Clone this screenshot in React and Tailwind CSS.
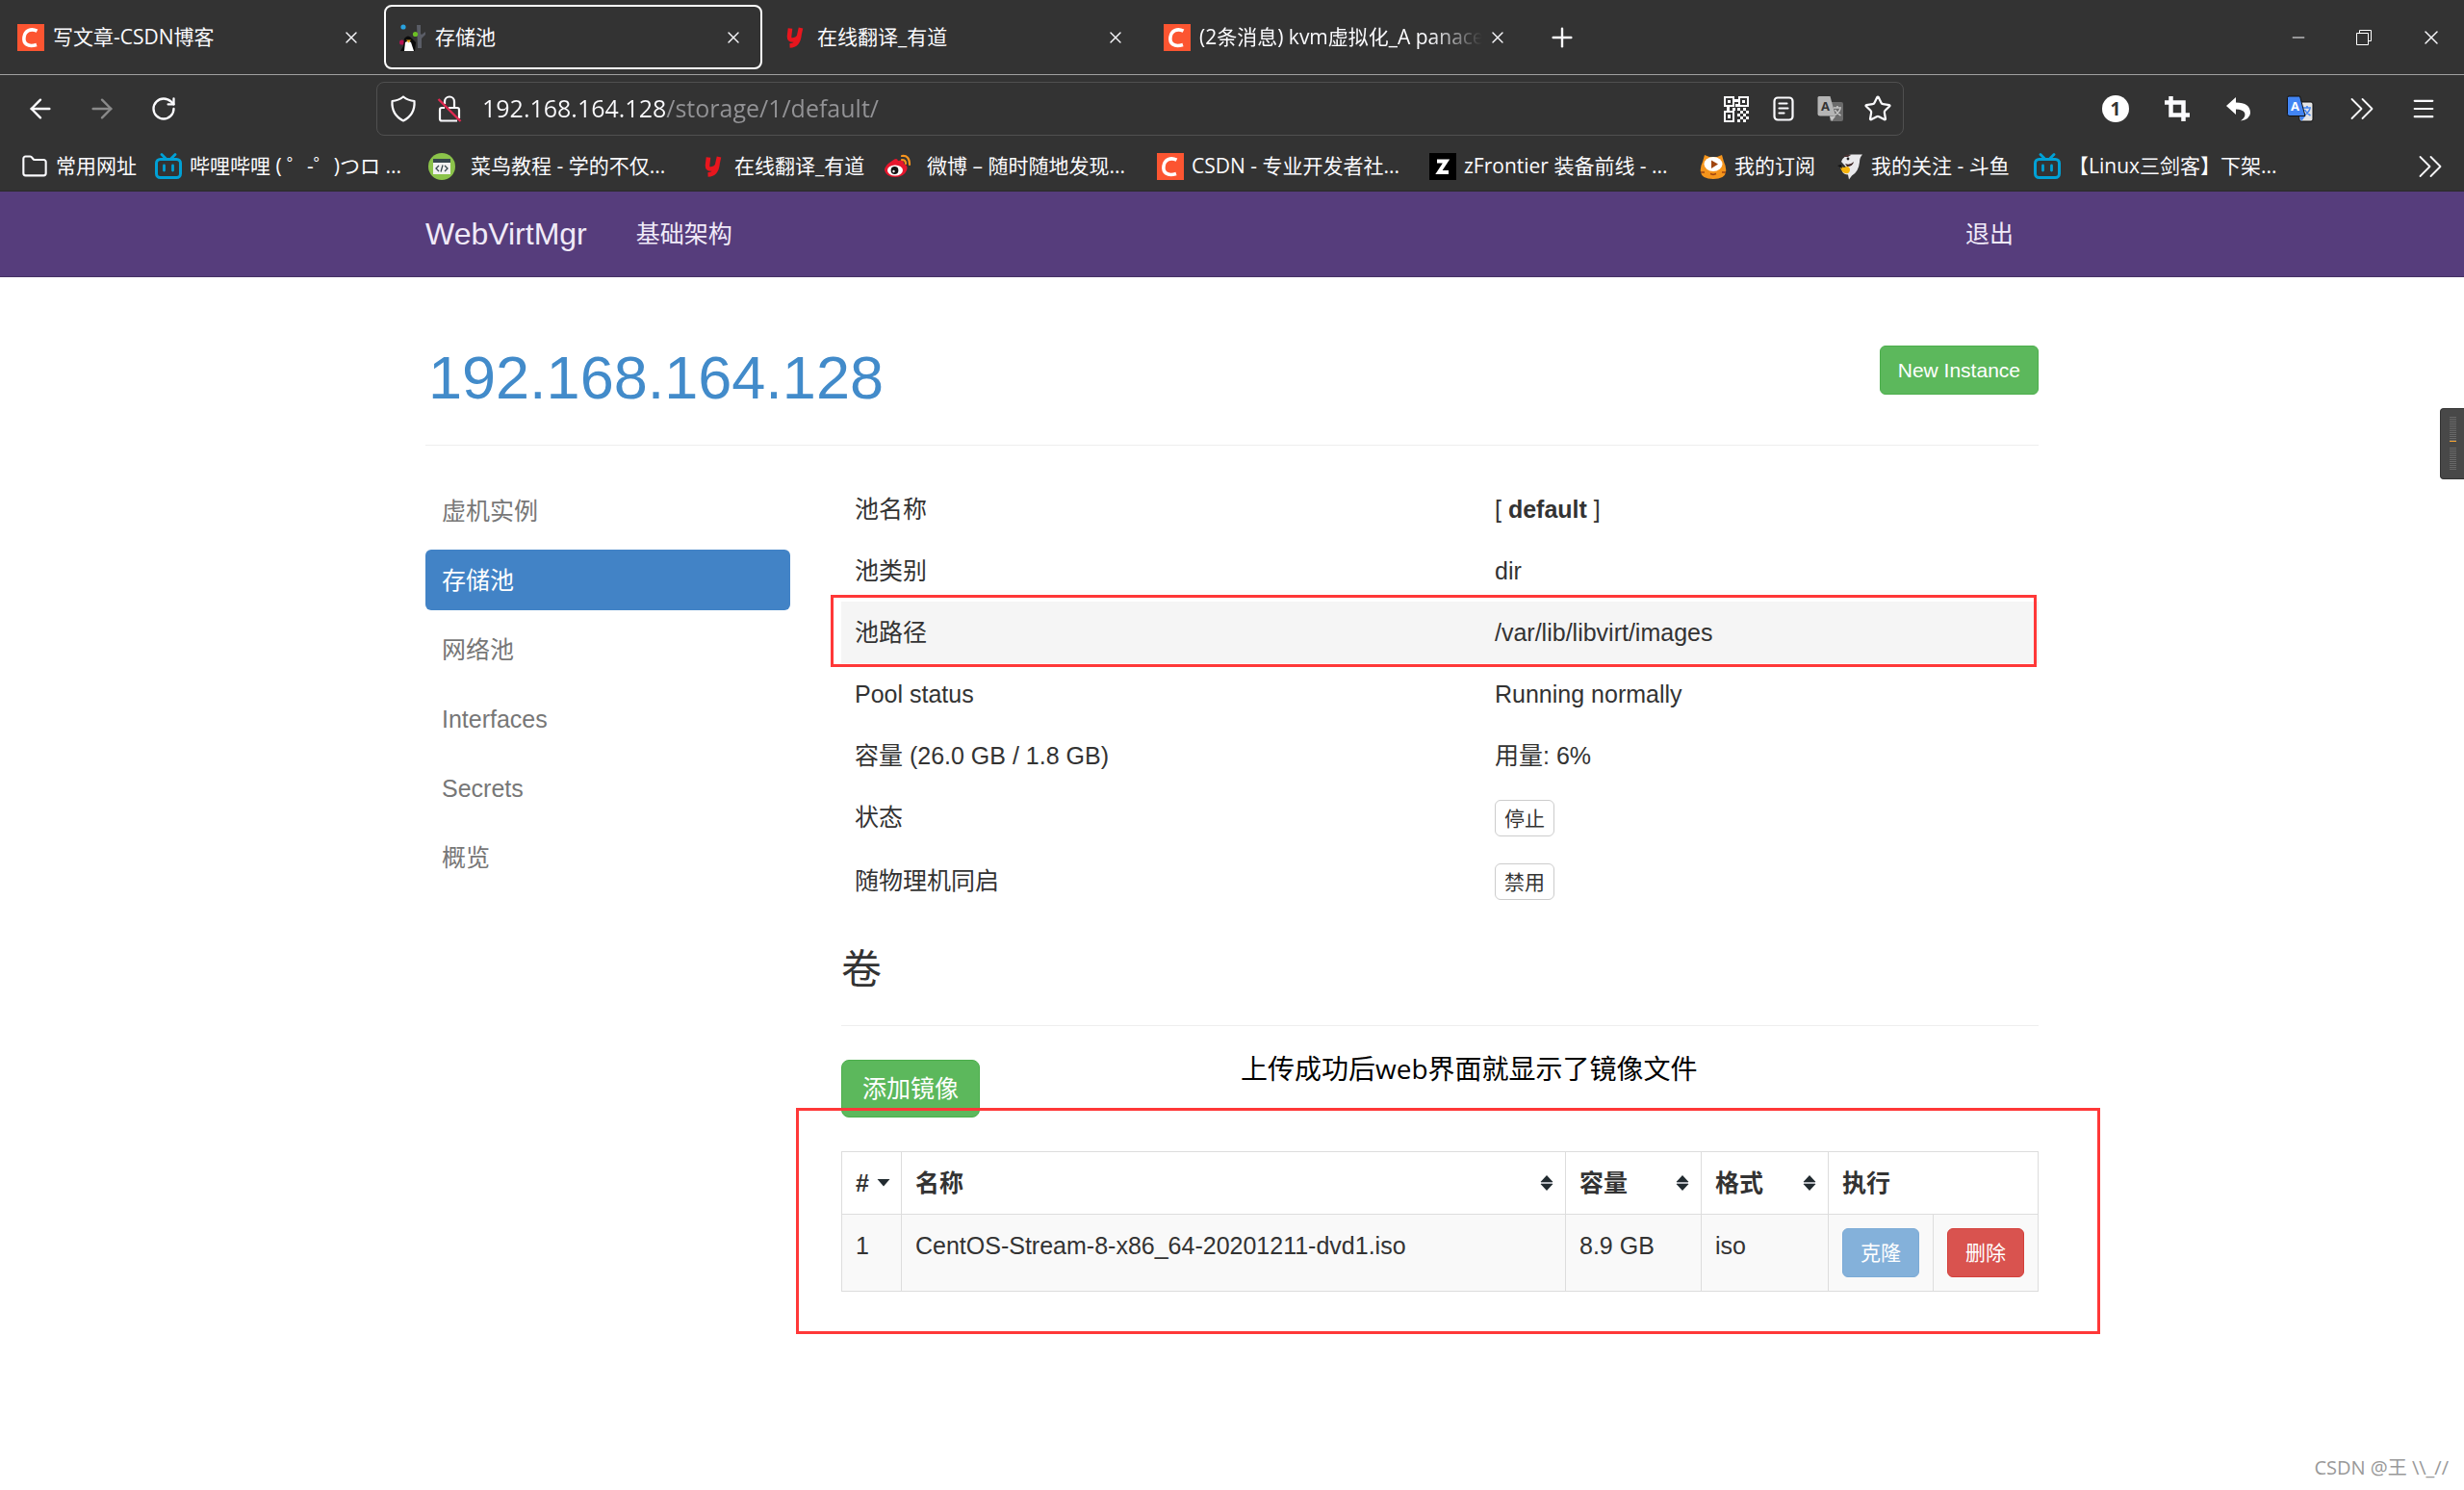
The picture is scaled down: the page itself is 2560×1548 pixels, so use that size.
import React from 'react';
import { X, Plus, Minus, ArrowLeft, ArrowRight, RotateCw, Folder, Star, Menu } from 'lucide-react';

/* ---------- site icons ---------- */

const CsdnIcon = () => (
  <svg viewBox="0 0 28 28" className="h-7 w-7 shrink-0" aria-hidden="true">
    <rect width="28" height="28" fill="#fc5531" />
    <path d="M20.5 7.2C14 4 8 7 7 13.5S10.500 24.500 20 21.500" fill="none" stroke="#fff" strokeWidth="3.600" />
  </svg>
);

const YoudaoIcon = () => (
  <svg viewBox="0 0 28 28" className="h-7 w-7 shrink-0" aria-hidden="true">
    <path d="M9 4.500L8 13q0 4 4 3.500t6-3.500l2-9M18.500 11q-1 11-10 11.500" fill="none" stroke="#e8161e" strokeWidth="4.600" />
  </svg>
);

const VirtIcon = () => (
  <svg viewBox="0 0 28 28" className="h-7 w-7 shrink-0" aria-hidden="true">
    <path d="M18 1h4v9l1 1 4-3v3l-4 4v10h-4z" fill="#5a5d66" />
    <circle cx="4" cy="3" r="2.600" fill="#29a3e0" />
    <circle cx="16.500" cy="10.500" r="2.600" fill="#6cc025" />
    <circle cx="2.600" cy="19" r="2.600" fill="#b5124f" />
    <path d="M5 15q4-5 8 0l4 4-1 9H1l3-5z" fill="#0b0b0b" />
    <path d="M6 19q3-2 6 0l3 9H5z" fill="#fff" />
    <path d="M7 16.500h5l-2.500 3z" fill="#f2b01e" />
  </svg>
);

const BiliIcon = () => (
  <svg viewBox="0 0 28 28" className="h-7 w-7 shrink-0" fill="none" stroke="#00a1d6" aria-hidden="true">
    <rect x="1.500" y="6.500" width="25" height="19" rx="4" strokeWidth="3" />
    <path d="M7 1.500l4 4M21 1.500l-4 4M9.500 13v5M18.500 13v5" strokeWidth="2.800" strokeLinecap="round" />
  </svg>
);

const RunoobIcon = () => (
  <svg viewBox="0 0 28 28" className="h-7 w-7 shrink-0" aria-hidden="true">
    <circle cx="14" cy="14" r="14" fill="#8bc34a" />
    <rect x="5" y="7" width="18" height="15" fill="#f1f1f1" />
    <rect x="5" y="6" width="18" height="4" fill="#37474f" />
    <path d="M11 13l-3 3 3 3M17 13l3 3-3 3M15 12.500l-2 7" fill="none" stroke="#37474f" strokeWidth="1.300" />
  </svg>
);

const WeiboIcon = () => (
  <svg viewBox="0 0 28 28" className="h-7 w-7 shrink-0" aria-hidden="true">
    <path d="M8 8q5-4 6 0 6-2 6 3 5 2 3 7-3 7-12 7T0 18Q0 13 8 8z" fill="#e6162d" />
    <ellipse cx="11" cy="18" rx="8" ry="5.500" fill="#fff" />
    <circle cx="10.500" cy="18" r="3.900" fill="#111" />
    <circle cx="9.500" cy="19" r="1.200" fill="#fff" />
    <path d="M18 3q8-1 8 9M18 7q4 0 4 4" fill="none" stroke="#f7941d" strokeWidth="2.200" strokeLinecap="round" />
  </svg>
);

const ZFrontierIcon = () => (
  <svg viewBox="0 0 28 28" className="h-7 w-7 shrink-0" aria-hidden="true">
    <rect width="28" height="28" fill="#000" />
    <path d="M8 8.500h9.500L10 20h10" fill="none" stroke="#fff" strokeWidth="4" />
  </svg>
);

const SubscribeIcon = () => (
  <svg viewBox="0 0 28 28" className="h-7 w-7 shrink-0" aria-hidden="true">
    <path d="M5 2l5 2h8l5-2 2 7q3 6 2 11-1 7-13 7T1 20Q0 15 3 9z" fill="#f5951c" />
    <ellipse cx="14" cy="11.500" rx="9.500" ry="7.500" fill="#fff" />
    <path d="M12 7.500l7 4-7 4.500z" fill="#a0450f" />
    <path d="M1 20h4M23 20h4M11 21.500l3 1 3-1" stroke="#a0450f" strokeWidth="1.500" fill="none" />
  </svg>
);

const DouyuIcon = () => (
  <svg viewBox="0 0 28 28" className="h-7 w-7 shrink-0" aria-hidden="true">
    <path d="M5 9Q8 1 17 1.500L27 1.500q-3 3-3 8-1 10-8 14l-3 4-1-5q-4 0-6-3l5-4z" fill="#e9e9ec" />
    <path d="M7 4q4-3 8-2l-3 2z" fill="#4a3030" />
    <circle cx="12" cy="6" r="1.400" fill="#222" />
    <path d="M9 11q5 2 9-2-1 5-7 5z" fill="#3a2222" />
    <path d="M4 14l4 1q5-3 6 2 0 5-5 4-4-1-5-7z" fill="#f6b40e" />
    <path d="M1 13l4-1 1 4z" fill="#111" />
  </svg>
);

/* ---------- toolbar icons ---------- */

const ShieldIcon = () => (
  <svg viewBox="0 0 28 28" className="h-7 w-7 shrink-0" fill="none" stroke="#fbfbfe" strokeWidth="2.200" aria-hidden="true">
    <path d="M14 1.500Q19 5.500 25.500 6 26.500 20 14 26.500 1.500 20 2.500 6 9 5.500 14 1.500z" strokeLinejoin="round" />
  </svg>
);

const InsecureIcon = () => (
  <svg viewBox="0 0 28 28" className="h-7 w-7 shrink-0" fill="none" stroke="#fbfbfe" strokeWidth="2.200" aria-hidden="true">
    <path d="M9 9V6.500a5 5 0 0110 0V13M9 13H6q-2 0-2 2v9.500q0 2 2 2h16M13 13h9q2 0 2 2v9" />
    <path d="M2.500 4L25.500 27" stroke="#e22850" strokeWidth="2.400" />
  </svg>
);

const QrIcon = () => (
  <svg viewBox="0 0 26 27" className="h-[27px] w-[26px]" fill="#fbfbfe" aria-hidden="true">
    <path fillRule="evenodd" d="M0 0h11v11H0zM2 2v7h7V2zM4 4h3v3H4zM15 0h11v11H15zM17 2v7h7V2zM19 4h3v3h-3zM0 15h11v12H0zM2 17v8h7v-8zM4 19h3v4H4z" />
    <path d="M11 3h4v3h-4zM3 11h3v4H3zM12 8h3v3h-3zM9 12h3v3H9zM14 12h3v3h-3zM20 12h3v3h-3zM17 15h3v3h-3zM23 15h3v3h-3zM14 18h3v3h-3zM20 18h3v3h-3zM17 21h3v3h-3zM23 21h3v3h-3zM14 24h3v3h-3zM20 24h3v3h-3z" />
  </svg>
);

const ReaderIcon = () => (
  <svg viewBox="0 0 22 26" className="h-[26px] w-[22px]" fill="none" stroke="#fbfbfe" strokeWidth="2.200" strokeLinecap="round" aria-hidden="true">
    <rect x="1.500" y="1.500" width="19" height="23" rx="3.500" />
    <path d="M6.500 7.500h8M6.500 12.500h9M6.500 17.500h5" />
  </svg>
);

const TranslateIcon = ({ front, back, ink, glyph }) => (
  <svg viewBox="0 0 28 28" className="h-7 w-7" aria-hidden="true">
    <rect x="13" y="7" width="14" height="20" rx="2" fill={back} stroke={ink} />
    <path d="M17 13h8M21 11v2M24 14q-2 5-7 7M18.500 15q2 4 6 6" fill="none" stroke={glyph} strokeWidth="1.600" />
    <path d="M2 1h11.500l5.500 20.500H3q-2.500 0-2.500-2V2.500Q.5 1 2 1z" fill={front} stroke={ink} />
    <path d="M13 22h6l-4 5z" fill={glyph} />
    <text x="4" y="16" fontSize="13" fontWeight="700" fontFamily="Open Sans, sans-serif" fill={ink === 'none' ? '#333' : '#fff'}>A</text>
  </svg>
);

const CropIcon = () => (
  <svg viewBox="0 0 26 26" className="h-[26px] w-[26px]" fill="none" stroke="#fbfbfe" strokeWidth="4.500" aria-hidden="true">
    <path d="M0 6.500h19.500V26M6.500 0v19.500H26" />
  </svg>
);

const UndoIcon = () => (
  <svg viewBox="0 0 26 26" className="h-[26px] w-[26px]" fill="#fff" aria-hidden="true">
    <path d="M0 10L10 1v5.500q15 0 15 11Q24.500 24 15 25.500q6-4 4-8.500-2-3.500-9-3.500V19z" />
  </svg>
);

const MoreIcon = () => (
  <svg viewBox="0 0 24 24" className="h-6 w-6" fill="none" stroke="#fbfbfe" strokeWidth="1.800" strokeLinecap="round" strokeLinejoin="round" aria-hidden="true">
    <path d="M1.500 2l10 10-10 10M12.500 2l10 10-10 10" />
  </svg>
);

const RestoreIcon = () => (
  <svg viewBox="0 0 16 16" className="h-4 w-4" fill="none" stroke="#fff" aria-hidden="true">
    <path d="M.5 3.500h12v12H.5zM3.500 3.500V.5h12v11h-3" />
  </svg>
);

/* ---------- data ---------- */

const tabs = [
  { title: '写文章-CSDN博客', Icon: CsdnIcon },
  { title: '存储池', Icon: VirtIcon, active: true },
  { title: '在线翻译_有道', Icon: YoudaoIcon },
  { title: '(2条消息) kvm虚拟化_A panace', Icon: CsdnIcon, fade: true },
];

const bookmarks = [
  { title: '常用网址', Icon: () => <Folder className="h-7 w-7 shrink-0" strokeWidth={1.8} />, width: 'w-[139px]' },
  { title: '哔哩哔哩 ( ゜-゜)つロ ...', Icon: BiliIcon, width: 'w-[284px]' },
  { title: '菜鸟教程 - 学的不仅...', Icon: RunoobIcon, width: 'w-[282px]', wide: true },
  { title: '在线翻译_有道', Icon: YoudaoIcon, width: 'w-[192px]' },
  { title: '微博 – 随时随地发现...', Icon: WeiboIcon, width: 'w-[283px]', wide: true },
  { title: 'CSDN - 专业开发者社...', Icon: CsdnIcon, width: 'w-[283px]' },
  { title: 'zFrontier 装备前线 - ...', Icon: ZFrontierIcon, width: 'w-[281px]' },
  { title: '我的订阅', Icon: SubscribeIcon, width: 'w-[142px]' },
  { title: '我的关注 - 斗鱼', Icon: DouyuIcon, width: 'w-[205px]' },
  { title: '【Linux三剑客】下架...', Icon: BiliIcon, width: 'w-[262px]' },
];

const menu = [
  { label: '虚机实例' },
  { label: '存储池', active: true },
  { label: '网络池' },
  { label: 'Interfaces' },
  { label: 'Secrets' },
  { label: '概览' },
];

const poolRows = [
  { label: '池名称', value: <>[ <strong>default</strong> ]</> },
  { label: '池类别', value: 'dir' },
  { label: '池路径', value: '/var/lib/libvirt/images', marked: true },
  { label: 'Pool status', value: 'Running normally' },
  { label: '容量 (26.0 GB / 1.8 GB)', value: '用量: 6%' },
  { label: '状态', action: '停止' },
  { label: '随物理机同启', action: '禁用' },
];

const volumes = [
  { id: 1, name: 'CentOS-Stream-8-x86_64-20201211-dvd1.iso', size: '8.9 GB', format: 'iso' },
];

/* ---------- browser ---------- */

const TabStrip = () => (
  <div className="flex h-[78px] items-center border-b border-[#a0a0a0] text-[21px]">
    {tabs.map(({ title, Icon, active, fade }, i) => (
      <div key={i} className="w-[397px] pl-0.5">
        <div
          className={
            active
              ? 'flex h-[67px] w-[393px] items-center rounded-lg border-2 border-white pr-[18px] pl-3.5'
              : 'flex h-[67px] w-[393px] items-center rounded-lg border-2 border-transparent pr-[18px] pl-3.5'
          }
        >
          <Icon />
          <span
            className={
              fade
                ? 'ml-[9px] min-w-0 flex-1 whitespace-nowrap mask-r-from-80% mask-r-to-98%'
                : 'ml-[9px] min-w-0 flex-1 whitespace-nowrap'
            }
          >
            {title}
          </span>
          <button type="button" aria-label="关闭标签页">
            <X className="h-5 w-5" strokeWidth={1.6} />
          </button>
        </div>
      </div>
    ))}
    <button type="button" aria-label="新建标签页" className="ml-[19px]">
      <Plus className="h-8 w-8" strokeWidth={1.8} />
    </button>
    <div className="ml-auto flex items-center gap-[50px] pr-[22px]">
      <button type="button" aria-label="最小化"><Minus className="h-5 w-5" strokeWidth={1.2} /></button>
      <button type="button" aria-label="还原"><RestoreIcon /></button>
      <button type="button" aria-label="关闭"><X className="h-6 w-6" strokeWidth={1.4} /></button>
    </div>
  </div>
);

const Toolbar = () => (
  <div className="flex h-[70px] items-center pr-7 pl-[26px]">
    <div className="flex w-[365px] items-center gap-8">
      <button type="button" aria-label="后退"><ArrowLeft className="h-8 w-8" strokeWidth={1.8} /></button>
      <button type="button" aria-label="前进"><ArrowRight className="h-8 w-8 text-[#8a8a8a]" strokeWidth={1.8} /></button>
      <button type="button" aria-label="刷新" className="flex w-8 justify-center"><RotateCw className="h-7 w-7" strokeWidth={2} /></button>
    </div>
    <div className="flex h-14 w-[1587px] min-w-0 items-center gap-5 rounded-lg border border-[#505050] pr-3 pl-[13px]">
      <ShieldIcon />
      <InsecureIcon />
      <input
        type="text"
        aria-label="地址栏"
        defaultValue="192.168.164.128/storage/1/default/"
        className="min-w-0 flex-1 bg-[linear-gradient(to_right,#fbfbfe_191px,#939396_191px)] bg-clip-text text-[25px] text-transparent outline-none"
      />
      <div className="flex items-center gap-[21px]">
        <button type="button" aria-label="二维码" className="flex w-7 justify-center"><QrIcon /></button>
        <button type="button" aria-label="阅读视图" className="flex w-7 justify-center"><ReaderIcon /></button>
        <button type="button" aria-label="翻译" className="flex w-7 justify-center"><TranslateIcon front="#b5b5b5" back="#6b6b6b" ink="none" glyph="#c4c4c4" /></button>
        <button type="button" aria-label="收藏" className="flex w-7 justify-center"><Star className="h-[30px] w-[30px] shrink-0" strokeWidth={1.8} /></button>
      </div>
    </div>
    <div className="ml-auto flex items-center gap-9">
      <button type="button" className="flex h-7 w-7 items-center justify-center rounded-full bg-white text-[19px] leading-7 font-bold text-[#333]">1</button>
      <button type="button" aria-label="截图" className="flex w-7 justify-center"><CropIcon /></button>
      <button type="button" aria-label="撤销" className="flex w-7 justify-center"><UndoIcon /></button>
      <button type="button" aria-label="翻译网页" className="flex w-7 justify-center"><TranslateIcon front="#4285f4" back="#e4e4e4" ink="#111" glyph="#4285f4" /></button>
      <button type="button" aria-label="更多工具" className="flex w-7 justify-center"><MoreIcon /></button>
      <button type="button" aria-label="菜单" className="flex w-7 justify-center"><Menu className="h-7 w-7" strokeWidth={1.8} /></button>
    </div>
  </div>
);

const BookmarkBar = () => (
  <nav className="flex h-[51px] items-center border-b border-[#2a2a2a] pr-[23px] pl-[22px] text-[21px]">
    {bookmarks.map(({ title, Icon, width, wide }, i) => (
      <div key={i} className={width}>
        <a href="#" className={wide ? 'flex items-center gap-4 whitespace-nowrap' : 'flex items-center gap-2 whitespace-nowrap'}>
          <Icon />
          <span>{title}</span>
        </a>
      </div>
    ))}
    <button type="button" aria-label="更多书签" className="ml-auto"><MoreIcon /></button>
  </nav>
);

/* ---------- page ---------- */

const SortIcon = ({ down }) => (
  <svg viewBox="0 0 14 18" className="h-[18px] w-3.5" fill="#222b30" aria-hidden="true">
    {down ? (
      <path d="M.5 5h13L7 12.500z" />
    ) : (
      <>
        <path d="M7 1l6.500 7H.5zM7 17l6.500-7H.5z" />
        <path d="M1 8h12v2H1z" fill="#b9bcc2" />
      </>
    )}
  </svg>
);

const Sidebar = () => (
  <ul className="flex w-[379px] shrink-0 flex-col gap-[9px] pt-0.5">
    {menu.map((item) => (
      <li key={item.label}>
        <a
          href="#"
          className={
            item.active
              ? 'block h-[63px] rounded-md bg-[#4283c6] px-[17px] py-3.5 text-white'
              : 'block h-[63px] rounded-md px-[17px] py-3.5 text-[#777]'
          }
        >
          {item.label}
        </a>
      </li>
    ))}
  </ul>
);

const PoolTable = () => (
  <table className="w-full table-fixed">
    <tbody>
      {poolRows.map((row) => (
        <tr key={row.label} className={row.marked ? 'relative h-16 bg-[#f5f5f5]' : 'h-16'}>
          <th scope="row" className="w-[665px] px-3.5 py-3.5 text-left align-top font-normal">
            {row.label}
            {row.marked && <span className="absolute -top-[7px] right-0.5 -bottom-1 -left-[11px] border-3 border-[#ff3838]" />}
          </th>
          <td className="px-3.5 py-3.5 align-top">
            {row.action ? (
              <button type="button" className="block h-[38px] rounded-md border border-[#ccc] bg-white px-[9px] text-[21px] leading-[35px]">
                {row.action}
              </button>
            ) : (
              row.value
            )}
          </td>
        </tr>
      ))}
    </tbody>
  </table>
);

const VolumeTable = () => (
  <table className="w-full table-fixed border-collapse [&_td]:border [&_td]:border-[#ddd] [&_td]:p-3.5 [&_td]:align-top [&_th]:border [&_th]:border-[#ddd] [&_th]:py-3.5 [&_th]:pr-3 [&_th]:pl-3.5 [&_th]:text-left">
    <colgroup>
      <col className="w-[62px]" />
      <col />
      <col className="w-[141px]" />
      <col className="w-[132px]" />
      <col className="w-[109px]" />
      <col className="w-[109px]" />
    </colgroup>
    <thead>
      <tr>
        <th scope="col">
          <button type="button" className="flex w-9 items-center justify-between font-bold"># <SortIcon down /></button>
        </th>
        {['名称', '容量', '格式'].map((label) => (
          <th key={label} scope="col">
            <button type="button" className="flex w-full items-center justify-between font-bold">{label} <SortIcon /></button>
          </th>
        ))}
        <th scope="col" colSpan={2}>执行</th>
      </tr>
    </thead>
    <tbody>
      {volumes.map((v) => (
        <tr key={v.id} className="bg-[#f9f9f9]">
          <td>{v.id}</td>
          <td>{v.name}</td>
          <td>{v.size}</td>
          <td>{v.format}</td>
          <td>
            <button type="button" disabled className="block h-[51px] w-full rounded-md border border-[#7baad6] bg-[#84b1da] text-[21px] text-white">克隆</button>
          </td>
          <td>
            <button type="button" className="block h-[51px] w-full rounded-md border border-[#d43f3a] bg-[#d9534f] text-[21px] text-white">删除</button>
          </td>
        </tr>
      ))}
    </tbody>
  </table>
);

const App = () => {
  return (
    <div className="relative min-h-screen bg-white">
      <header className="bg-[#333] font-['Open_Sans','Noto_Sans_CJK_SC',sans-serif] text-[#fbfbfe]">
        <TabStrip />
        <Toolbar />
        <BookmarkBar />
      </header>

      <div className="font-['Liberation_Sans','Noto_Sans_CJK_SC',sans-serif] text-[25px] leading-9 text-[#333]">
        <nav className="h-[89px] border-b border-[#463265] bg-[#563d7c] text-[#f0eaf8]">
          <div className="mx-auto flex h-full max-w-[1676px] items-center">
            <a href="#" className="text-[32px]">WebVirtMgr</a>
            <a href="#" className="ml-[51px]">基础架构</a>
            <a href="#" className="mr-[26px] ml-auto">退出</a>
          </div>
        </nav>

        <main className="mx-auto max-w-[1676px] pt-[71px]">
          <div className="flex items-start justify-between border-b border-[#eee] pb-9">
            <h1 className="pl-[3px] text-[63px] leading-[67px]">
              <a href="#" className="text-[#428bca]">192.168.164.128</a>
            </h1>
            <button type="button" className="h-[51px] rounded-md border border-[#4cae4c] bg-[#5cb85c] px-[18px] text-[21px] text-white">
              New Instance
            </button>
          </div>

          <div className="mt-[34px] flex gap-[53px]">
            <Sidebar />
            <section className="min-w-0 flex-1">
              <PoolTable />
              <h2 className="border-b border-[#eee] pt-9 pb-[34px] text-[42px] leading-[46px]">卷</h2>
              <div className="relative pt-[35px]">
                <button type="button" className="h-[60px] rounded-lg border border-[#4cae4c] bg-[#5cb85c] px-[21px] text-white">
                  添加镜像
                </button>
                <p className="absolute top-[23px] left-[415px] font-['Open_Sans','Noto_Sans_CJK_SC',sans-serif] text-[28px] leading-[42px] whitespace-nowrap text-black">
                  上传成功后web界面就显示了镜像文件
                </p>
              </div>
              <div className="relative pt-[35px]">
                <VolumeTable />
                <span className="pointer-events-none absolute -top-2.5 -right-16 -bottom-11 -left-[47px] border-3 border-[#ff3838]" />
              </div>
            </section>
          </div>
        </main>
      </div>

      {/* speed monitor docked to the window edge */}
      <div className="absolute top-[424px] right-0 flex h-[74px] w-[25px] flex-col items-center justify-between rounded-l-sm border border-r-0 border-[#333] bg-[#484848] py-2">
        <div className="h-[26px] w-[7px] border-b border-[#f0a030] bg-[repeating-linear-gradient(#686868_0_1px,#484848_1px_2px)]" />
        <div className="h-6 w-[7px] bg-[repeating-linear-gradient(#686868_0_1px,#484848_1px_2px)]" />
      </div>

      <div className="absolute right-4 bottom-2 font-['Open_Sans','Noto_Sans_CJK_SC',sans-serif] text-[20px] text-[#999]">
        CSDN @王 \\_//
      </div>
    </div>
  );
};

export default App;
